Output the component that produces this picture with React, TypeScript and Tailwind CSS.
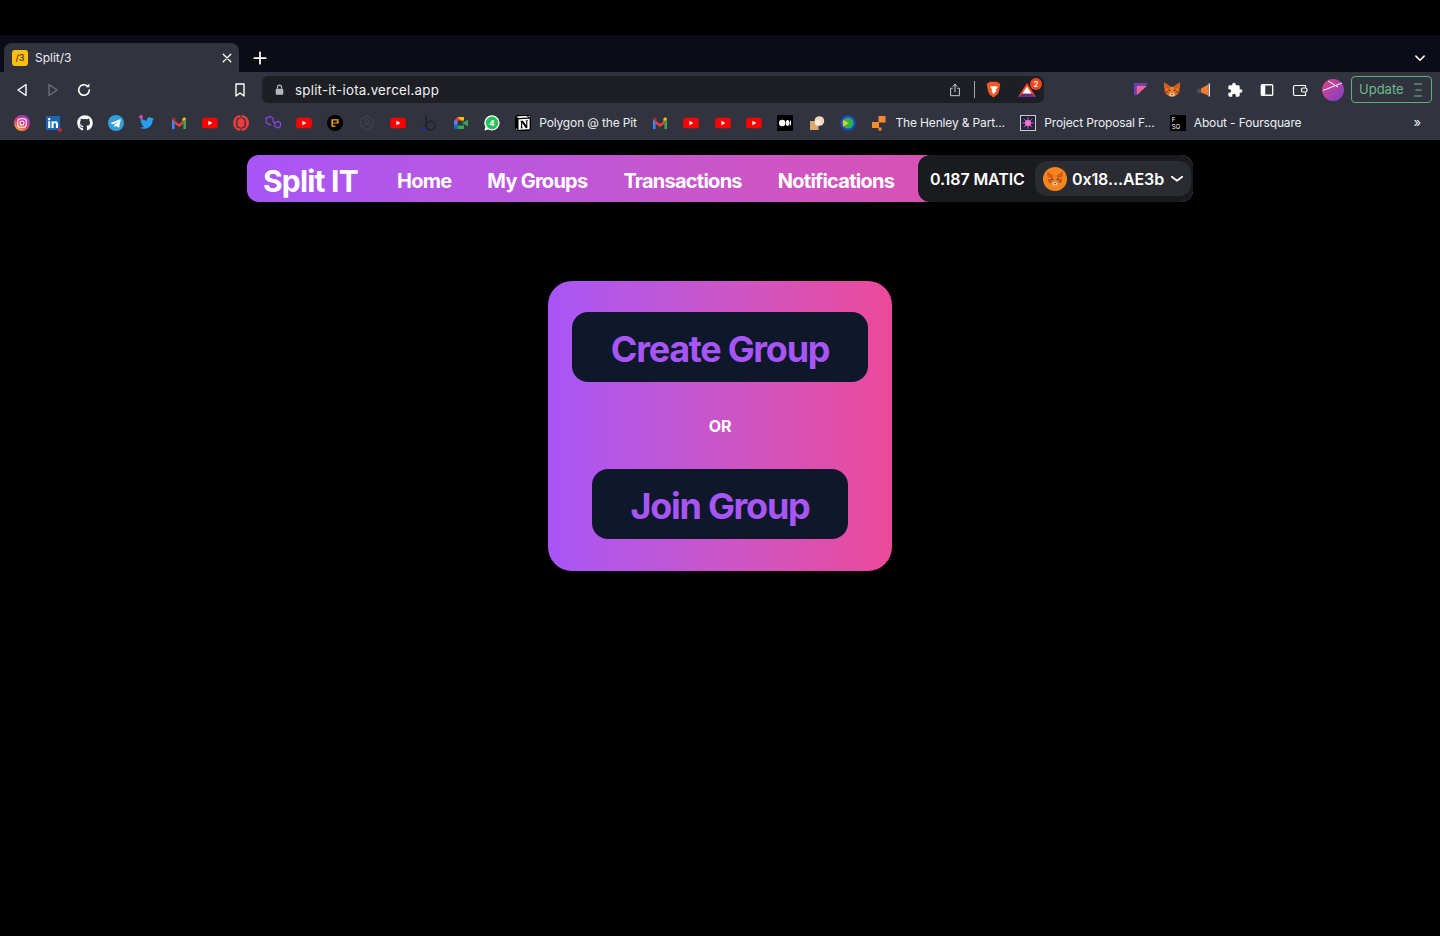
import React from "react";
import { FaGithub, FaTwitter, FaLinkedin } from "react-icons/fa";
import { SiNotion } from "react-icons/si";

const Box = ({ children, className = "" }: { children?: React.ReactNode; className?: string }) => (
  <svg viewBox="0 0 16 16" className={`w-4 h-4 shrink-0 ${className}`}>{children}</svg>
);

const Fox = ({ className = "w-4 h-4" }: { className?: string }) => (
  <svg viewBox="0 0 32 30" className={className}>
    <path d="M1 1L13 9.500H19L31 1L32 10L30 14L31 17L28 24L20 29H12L4 24L1 17L2 14L0 10Z" fill="#f08321" />
    <path d="M1 1L13 9.500L11 14L3 13L0 10Z" fill="#d9591a" />
    <path d="M31 1L19 9.500L21 14L29 13L32 10Z" fill="#d9591a" />
    <path d="M1 17L8 16L10 23L4 24Z M31 17L24 16L22 23L28 24Z" fill="#c9501a" />
    <path d="M8 14.500L14 16.500L10 18.500Z M24 14.500L18 16.500L22 18.500Z" fill="#233447" />
    <path d="M11 24L16 22L21 24L20 28.500H12Z" fill="#e8d5c6" />
    <path d="M13.500 24.500H18.500L16 27Z" fill="#1b1b1b" />
  </svg>
);

const YouTube = () => (
  <Box>
    <rect x="0.2" y="2.7" width="15.6" height="10.6" rx="2.6" fill="#f00" />
    <path d="M6.4 5.8l4 2.2-4 2.2z" fill="#fff" />
  </Box>
);

const Gmail = () => (
  <Box>
    <path d="M1 14V4l2.6 1.7V14z" fill="#4285f4" />
    <path d="M15 14V4l-2.600 1.700V14z" fill="#34a853" />
    <path d="M3.600 5.700L8 9l4.400-3.300v3L8 12 3.600 8.700z" fill="#ea4335" />
    <path d="M1 4.200C1 2.600 2.600 2 3.600 2.800l1 .8v3z" fill="#c5221f" />
    <path d="M15 4.200c0-1.600-1.600-2.200-2.600-1.400l-1 .8v3z" fill="#fbbc04" />
  </Box>
);

const icons: Record<string, React.ReactNode> = {
  instagram: (
    <Box>
      <defs>
        <linearGradient id="ig" x1="0.2" y1="1" x2="0.8" y2="0">
          <stop offset="0" stopColor="#fdc02f" />
          <stop offset="0.45" stopColor="#e8366f" />
          <stop offset="1" stopColor="#8a47d6" />
        </linearGradient>
      </defs>
      <circle cx="8" cy="8" r="8" fill="url(#ig)" />
      <rect x="3.800" y="3.800" width="8.400" height="8.400" rx="2.400" fill="none" stroke="#fff" strokeWidth="1.100" />
      <circle cx="8" cy="8" r="2" fill="none" stroke="#fff" strokeWidth="1.100" />
    </Box>
  ),
  linkedin: (
    <div className="relative w-4 h-4">
      <span className="absolute left-[2px] top-[2px] w-3 h-3 bg-white" />
      <FaLinkedin className="absolute inset-0 w-4 h-4 text-[#1a66b8]" />
      <span className="absolute right-[-1px] bottom-[-1px] w-[4px] h-[4px] rounded-full bg-[#d3242c]" />
    </div>
  ),
  github: <FaGithub className="w-4 h-4 text-white" />,
  telegram: (
    <Box>
      <circle cx="8" cy="8" r="8" fill="#2f9fe0" />
      <path d="M3 7.900l9-3.600c.5-.2.9.1.7.8l-1.500 7c-.1.5-.5.6-.9.4L8 10.800 6.700 12c-.2.2-.4.1-.4-.2l.1-2 4-3.700-5 3.100L3 8.500c-.4-.2-.4-.4 0-.6z" fill="#fff" />
    </Box>
  ),
  twitter: (
    <div className="relative w-4 h-4 flex items-center justify-center">
      <FaTwitter className="w-[14px] h-[14px] text-[#2a9df0]" />
      <span className="absolute left-0 top-0 w-[4px] h-[4px] rounded-full bg-[#e0409a]" />
    </div>
  ),
  gmail: <Gmail />,
  youtube: <YouTube />,
  red: (
    <Box>
      <circle cx="8" cy="8" r="8" fill="#ee3b3b" />
      <rect x="3.800" y="3.200" width="8.400" height="9.600" rx="3.400" fill="none" stroke="#2f323d" strokeWidth="1.300" />
      <rect x="6.800" y="1" width="2.400" height="14" fill="#ee3b3b" />
      <path d="M7.400 0h1.200v3.500H7.400zM7.400 12.500h1.200V16H7.400z" fill="#2f323d" />
    </Box>
  ),
  polygon: (
    <Box>
      <path d="M5 1.400l3.200 1.900v3.400L9.800 8v3.200l3.100 1.700 2.700-1.700V8l-2.700-1.600L10 8 8.200 6.700M6 9.300L5 9.900 1.200 7.700V3.300L5 1.400" fill="none" stroke="#8247e5" strokeWidth="1.300" strokeLinejoin="round" />
    </Box>
  ),
  black: (
    <Box>
      <circle cx="8" cy="8" r="8" fill="#000" />
      <path d="M4.400 4.200h7.200v1.300H5.900v1.900h4v1.200h-4v1.900h2.600v1.300H4.400z" fill="#f6a823" />
      <rect x="9.800" y="5.500" width="1.800" height="3" fill="#f6a823" />
    </Box>
  ),
  dim: (
    <Box>
      <path d="M8 1l6 3.300v7.400L8 15l-6-3.300V4.300z" fill="none" stroke="#43464f" strokeWidth="1" />
      <circle cx="8" cy="6.600" r="2.100" fill="none" stroke="#43464f" strokeWidth="1" />
      <path d="M4 12c.6-2 2-3 4-3s3.400 1 4 3" fill="none" stroke="#43464f" strokeWidth="1" />
    </Box>
  ),
  b: (
    <Box>
      <path d="M5 0v12" stroke="#1c1e26" strokeWidth="1.200" />
      <circle cx="9.600" cy="10.600" r="4.500" fill="none" stroke="#1c1e26" strokeWidth="1.200" />
      <circle cx="2.600" cy="14.200" r="1.400" fill="#1426e8" />
    </Box>
  ),
  meet: (
    <Box>
      <path d="M1 5.500L4.500 2H11v3.500H4.500V8H1z" fill="#ea4335" />
      <path d="M4.500 2H11v3.500H8" fill="#fbbc04" />
      <path d="M1 5.500h3.500v5H1z" fill="#4285f4" />
      <path d="M1 10.500h3.500V14H3a2 2 0 0 1-2-2z" fill="#1967d2" />
      <path d="M4.500 10.500H11V14H4.500z" fill="#34a853" />
      <path d="M11 5.500V10.500L8.500 8z" fill="#188038" />
      <path d="M11 7l4-2.600v7.200L11 9z" fill="#34a853" />
    </Box>
  ),
  whatsapp: (
    <div className="relative w-4 h-4">
      <svg viewBox="0 0 16 16" className="absolute inset-0 w-4 h-4">
        <path d="M8 .3a7.600 7.600 0 0 0-6.600 11.400L.4 15.600l4-1A7.600 7.600 0 1 0 8 .3z" fill="#fff" />
        <circle cx="8" cy="7.900" r="6.300" fill="#25c35a" />
      </svg>
      <span className="absolute inset-0 flex items-center justify-center text-[8px] font-bold text-white leading-none">4</span>
    </div>
  ),
  notion: (
    <div className="relative w-4 h-4 bg-white rounded-[2px] border border-black flex items-center justify-center overflow-hidden">
      <SiNotion className="w-4 h-4 text-black shrink-0" />
    </div>
  ),
  medium: (
    <Box>
      <rect width="16" height="16" rx="1" fill="#000" />
      <circle cx="5.200" cy="8" r="3.200" fill="#fff" />
      <ellipse cx="10.600" cy="8" rx="1.700" ry="3" fill="#fff" />
      <ellipse cx="13.400" cy="8" rx="0.700" ry="2.800" fill="#fff" />
    </Box>
  ),
  peach: (
    <Box>
      <rect x="1" y="6" width="8.500" height="9" fill="#dfa86b" />
      <circle cx="10.400" cy="6" r="4.800" fill="#f5d6bf" />
      <circle cx="9" cy="8" r="3" fill="#fff" opacity="0.55" />
    </Box>
  ),
  ring: (
    <Box>
      <circle cx="8" cy="8" r="7.800" fill="#1b48c9" />
      <circle cx="8" cy="8" r="5.600" fill="#2cb34a" />
      <path d="M3 4.800l6 3.400-6 3.200z" fill="#f2c12e" />
    </Box>
  ),
  orange: (
    <Box>
      <rect x="7.500" y="1" width="7" height="6.500" fill="#f78a2a" />
      <rect x="1" y="7" width="7" height="6" fill="#f78a2a" />
      <rect x="7.500" y="12.500" width="3" height="3" fill="#f78a2a" />
    </Box>
  ),
  project: (
    <Box>
      <rect x="0.500" y="0.500" width="15" height="15" fill="#26233a" stroke="#c9c9d0" />
      <circle cx="8" cy="8" r="3.200" fill="#f04fd0" />
      <path d="M8 2.200v11.600M2.200 8h11.600M3.800 3.800l8.400 8.400M12.200 3.800l-8.400 8.400" stroke="#e79de0" strokeWidth="0.600" />
    </Box>
  ),
  fsq: (
    <div className="w-4 h-4 bg-black text-white text-[6px] leading-[7px] pl-[2px] pt-[1px]">
      F<br />SQ
    </div>
  ),
};

const Bookmark = ({ icon, label, className = "" }: { icon: string; label?: string; className?: string }) => (
  <div className={`flex items-center gap-2 px-[7.67px] h-full shrink-0 ${label ? "" : "w-[31.33px]"} ${className}`}>
    {icons[icon]}
    {label && <span className="pt-px text-[12px] text-[#eceef2] tracking-[-0.15px] whitespace-nowrap">{label}</span>}
  </div>
);

const Nav = ({ children }: { children: React.ReactNode }) => (
  <a className="text-[20px] font-bold text-white whitespace-nowrap tracking-[-0.75px]">{children}</a>
);

const Stroke = ({ children, className = "w-4 h-4" }: { children: React.ReactNode; className?: string }) => (
  <svg viewBox="0 0 16 16" className={`${className} shrink-0`} fill="none" stroke="currentColor" strokeWidth="1.400" strokeLinecap="round" strokeLinejoin="round">
    {children}
  </svg>
);

export default function App() {
  return (
    <div className="w-[1440px] h-[936px] overflow-hidden bg-black font-['Inter',sans-serif] text-white">
      {/* browser chrome */}
      <div className="pt-[35px]">
        <div className="h-[37px] bg-[#0b0c16] flex items-end pl-1 pr-[14px]">
          <div className="w-[235px] h-[29px] bg-[#31343f] rounded-t-lg flex items-center pl-2 pr-[6px] shrink-0">
            <div className="w-4 h-4 rounded-[3px] bg-[#fbbf12] text-[#5b4300] text-[9px] font-semibold leading-4 text-center">/3</div>
            <span className="ml-[7px] text-[12px] text-[#eceef2] flex-1">Split/3</span>
            <Stroke className="w-[12px] h-[12px] text-white"><path d="M3 3l10 10M13 3L3 13" strokeWidth="1.800" /></Stroke>
          </div>
          <div className="h-[29px] flex items-center ml-[14px] flex-1">
            <Stroke className="w-[14px] h-[14px] text-white"><path d="M8 1.500v13M1.500 8h13" strokeWidth="2" /></Stroke>
          </div>
          <div className="h-[29px] flex items-center">
            <Stroke className="w-[12px] h-[12px] text-white"><path d="M2.500 5.500L8 11l5.500-5.500" strokeWidth="2" /></Stroke>
          </div>
        </div>

        {/* toolbar */}
        <div className="h-[34px] bg-[#31343f] flex items-start pt-1 text-white">
          <div className="h-[27px] flex items-center pl-[14px] shrink-0">
            <Stroke className="w-4 h-4 text-white"><path d="M12 2.500L4 8l8 5.500z" /></Stroke>
            <Stroke className="w-4 h-4 ml-[15px] text-[#6d7079]"><path d="M4 2.500L12 8l-8 5.500z" /></Stroke>
            <Stroke className="w-4 h-4 ml-[15px] text-white"><path d="M13.300 8a5.300 5.300 0 1 1-1.700-3.900" strokeWidth="1.600" /><path d="M13.400 1.600v3.600H9.800" fill="currentColor" stroke="none" /></Stroke>
            <Stroke className="w-4 h-4 ml-[140px] text-white"><path d="M4 2h8v12l-4-3-4 3z" /></Stroke>
          </div>
          <div className="ml-[14px] w-[782px] h-[27px] rounded-md bg-[#1e1f24] flex items-center pl-[12px] pr-[8px] shrink-0">
            <svg viewBox="0 0 16 16" className="w-[11px] h-[11px] text-[#b5b7bd] shrink-0">
              <rect x="2.500" y="7" width="11" height="8.500" rx="1.400" fill="currentColor" />
              <path d="M5 7V4.600a3 3 0 0 1 6 0V7" fill="none" stroke="currentColor" strokeWidth="1.600" />
            </svg>
            <span className="ml-[10px] pt-[2px] text-[13.3px] tracking-[0.25px] text-[#f0f1f4] flex-1 whitespace-nowrap">split-it-iota.vercel.app</span>
            <Stroke className="w-[14px] h-[14px] text-[#d0d2d8]"><path d="M5 6H3v8.500h10V6h-2M8 10V1.500M5.600 3.800L8 1.500l2.400 2.300" strokeWidth="1.100" /></Stroke>
            <span className="w-px h-[17px] ml-[12px] bg-[#a5a7ad]" />
            <svg viewBox="0 0 16 18" className="w-[15px] h-[17px] ml-[11px] shrink-0">
              <path d="M4 .6h8l1.600 1.700 1.600.2-.4 3.400L14 10l-1.500 4L8 17.400 3.500 14 2 10 1.200 5.900.8 2.500l1.600-.2z" fill="#f15a22" />
              <path d="M4.600 5.400L6.600 5.800 8 5.200l1.400.6 2-.4 1 1.500-2 2.200.7 1.600L8 13 5.900 10.500l.7-1.600-2-2.200z" fill="#fff" />
              <path d="M6.400 12.500L8 13.800l1.600-1.300L8 11.700z" fill="#fff" />
            </svg>
            <div className="relative ml-[17px] w-[18px] h-[14px] shrink-0">
              <svg viewBox="0 0 18 14" className="w-[18px] h-[14px]">
                <path d="M9 0l9 14H0z" fill="#ff4724" />
                <path d="M0 14l4.500-3.500h9L18 14z" fill="#662d91" />
                <path d="M9 3.500l4.500 7h-9z" fill="#fff" />
              </svg>
              <span className="absolute right-[-6px] top-[-5px] w-3 h-3 rounded-full bg-[#f0471f] text-white text-[8px] leading-3 text-center font-semibold">2</span>
            </div>
          </div>
          <div className="h-[27px] flex items-center ml-[89px] shrink-0">
            <svg viewBox="0 0 16 16" className="w-[15px] h-[15px] shrink-0">
              <path d="M1 1h15l-3 3H4v9l-3 2z" fill="#6b3fb0" />
              <path d="M4 4h11L4 14z" fill="#f0619d" />
            </svg>
            <Fox className="w-4 h-[15px] ml-[16px]" />
            <svg viewBox="0 0 16 16" className="w-4 h-4 ml-[15px] shrink-0">
              <circle cx="4" cy="9" r="2.400" fill="#4a4d57" />
              <path d="M6 6.500l7-4v11l-7-3z" fill="#f47a2a" />
              <rect x="13.500" y="1.500" width="1.500" height="13" fill="#e6e6ea" />
            </svg>
            <svg viewBox="0 0 24 24" className="w-4 h-4 ml-[16px] text-white shrink-0" fill="currentColor">
              <path d="M20.500 11H19V7c0-1.100-.9-2-2-2h-4V3.500C13 2.120 11.880 1 10.500 1S8 2.120 8 3.500V5H4c-1.100 0-1.990.9-1.990 2v3.800H3.500c1.490 0 2.700 1.210 2.700 2.700s-1.210 2.700-2.700 2.700H2V20c0 1.100.9 2 2 2h3.800v-1.500c0-1.490 1.210-2.700 2.700-2.700 1.490 0 2.700 1.210 2.700 2.700V22H17c1.100 0 2-.9 2-2v-4h1.500c1.380 0 2.500-1.120 2.500-2.500S21.880 11 20.500 11z" />
            </svg>
            <Stroke className="w-[14px] h-[14px] ml-[17px] text-white"><rect x="1.500" y="2" width="13" height="12" rx="1" strokeWidth="1.500" /><rect x="2" y="2.500" width="4" height="11" fill="currentColor" stroke="none" /></Stroke>
            <Stroke className="w-4 h-4 ml-[18px] text-white"><path d="M13.500 5V3.500H3A1.500 1.500 0 0 0 1.500 5v7A1.500 1.500 0 0 0 3 13.500h10.500V11" strokeWidth="1.200" /><rect x="9.500" y="6" width="5.500" height="4" rx="1.500" strokeWidth="1.200" /></Stroke>
            <svg viewBox="0 0 22 22" className="w-[22px] h-[22px] ml-[14px] shrink-0">
              <defs>
                <linearGradient id="av" x1="0" y1="0" x2="1" y2="1">
                  <stop offset="0" stopColor="#e2447f" />
                  <stop offset="1" stopColor="#7b3fd0" />
                </linearGradient>
              </defs>
              <circle cx="11" cy="11" r="11" fill="url(#av)" />
              <path d="M1 11.500L20 4M6 2l10 6" stroke="#fff" strokeWidth="1" fill="none" />
            </svg>
            <div className="ml-[7px] w-[81px] h-[27px] rounded-[4px] border border-[#5fae7f] flex items-center pl-[7px] pr-2 text-[#6dbb8b]">
              <span className="pt-px text-[13px] flex-1">Update</span>
              <svg viewBox="0 0 10 14" className="w-[10px] h-[14px] shrink-0">
                <path d="M1 1h8M2.500 7h6M1 13h8" stroke="currentColor" strokeWidth="1.200" fill="none" />
              </svg>
            </div>
          </div>
        </div>

        {/* bookmarks */}
        <div className="h-[34px] pb-px bg-[#31343f] flex items-center pl-[6.3px] pr-[19px]">
          {["instagram", "linkedin", "github", "telegram", "twitter", "gmail", "youtube", "red", "polygon", "youtube", "black", "dim", "youtube", "b", "meet", "whatsapp"].map((k, i) => (
            <Bookmark key={i} icon={k} />
          ))}
          <Bookmark icon="notion" label="Polygon @ the Pit" />
          {["gmail", "youtube", "youtube", "youtube", "medium", "peach", "ring"].map((k, i) => (
            <Bookmark key={i} icon={k} />
          ))}
          <Bookmark icon="orange" label="The Henley & Part..." />
          <Bookmark icon="project" label="Project Proposal F..." />
          <Bookmark icon="fsq" label="About - Foursquare" />
          <span className="ml-auto text-[13px] text-[#eceef2] leading-none">»</span>
        </div>
      </div>

      {/* page */}
      <div className="pt-[15px] flex flex-col items-center">
        <nav className="w-[946px] h-[47px] rounded-xl bg-gradient-to-r from-[#a855f7] to-[#ec4899] flex items-center pl-[16px] relative">
          <span className="text-[30px] font-bold text-white leading-none mr-[39px] pt-[4px] tracking-[-0.8px]">Split IT</span>
          <div className="flex items-center gap-[36px] pt-[5px]">
            <Nav>Home</Nav>
            <Nav>My Groups</Nav>
            <Nav>Transactions</Nav>
            <Nav>Notifications</Nav>
          </div>
          <div className="absolute right-0 top-0 w-[275px] h-[47px] rounded-xl bg-[#1a1b1f] flex items-center pl-[12px] pr-[2px]">
            <span className="text-[16px] font-semibold whitespace-nowrap flex-1 tracking-[-0.1px]">0.187 MATIC</span>
            <div className="w-[156px] h-[35px] rounded-xl bg-[#2b2c31] flex items-center pl-[8px]">
              <div className="w-6 h-6 rounded-full bg-[#f6851b] flex items-center justify-center shrink-0">
                <Fox className="w-[16px] h-[15px]" />
              </div>
              <span className="ml-[5px] text-[16px] font-semibold whitespace-nowrap tracking-[-0.1px]">0x18...AE3b</span>
              <Stroke className="w-[14px] h-[14px] ml-[6px] text-white"><path d="M2 5.500L8 10l6-4.500" strokeWidth="2" /></Stroke>
            </div>
          </div>
        </nav>

        <div className="mt-[79px] w-[344px] h-[290px] rounded-3xl bg-gradient-to-r from-[#a855f7] to-[#ec4899] flex flex-col items-center pt-[31px]">
          <button className="w-[296px] h-[70px] pt-1 rounded-2xl bg-[#0f172a] text-[36px] font-bold tracking-[-1.3px] text-[#a855f7]">Create Group</button>
          <span className="mt-[34px] text-[16px] font-bold leading-[21px] text-white tracking-[-0.2px]">OR</span>
          <button className="mt-[32px] w-[256px] h-[70px] pt-[3px] rounded-2xl bg-[#0f172a] text-[36px] font-bold tracking-[-1.3px] text-[#a855f7]">Join Group</button>
        </div>
      </div>
    </div>
  );
}
